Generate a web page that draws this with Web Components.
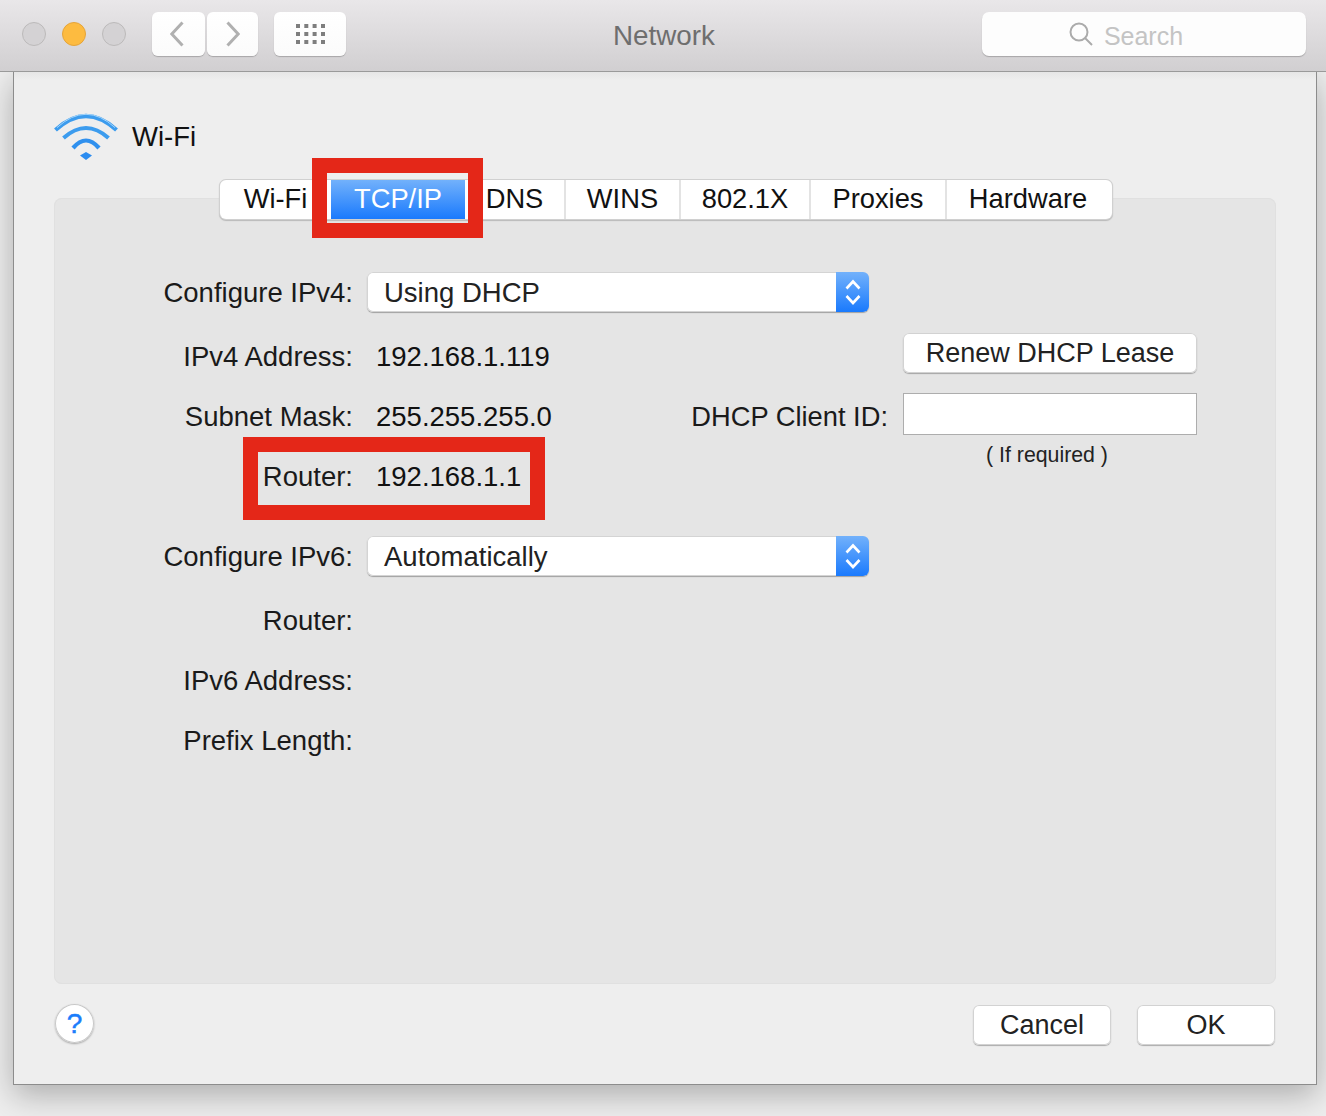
<!DOCTYPE html>
<html>
<head>
<meta charset="utf-8">
<title>Network</title>
<style>
  html, body { margin: 0; height: 1116px; overflow: hidden; background: #eeeeee; }
  body { font-family: 'Liberation Sans', Arial, sans-serif; font-size: 27.5px; color: #1a1a1a; }
</style>
</head>
<body>
<net-app></net-app>

<script>
// small helper, every element below has the same shadow setup
function shadow(el, html) {
  el.attachShadow({ mode: 'open' });
  el.shadowRoot.innerHTML = html;
}

class ToolButton extends HTMLElement {
  connectedCallback() {
    shadow(this, `
      <style>
        :host {
          display: flex; align-items: center; justify-content: center;
          height: 44px; width: var(--w, 52px); box-sizing: border-box;
          background: linear-gradient(#ffffff, #fbfbfb);
          border-radius: 6px;
          box-shadow: 0 1px 1px rgba(0,0,0,.22);
        }
        svg { display: block; }
      </style>
      <slot></slot>`);
  }
}
customElements.define('tool-button', ToolButton);

class MacToolbar extends HTMLElement {
  connectedCallback() {
    shadow(this, `
      <style>
        :host {
          display: flex; align-items: center; box-sizing: border-box;
          height: 72px; padding: 0 20px 4px 22px;
          background: linear-gradient(#e9e7e9, #d1cfd1);
          border-bottom: 1px solid #9a9a9a;
          position: relative; z-index: 2;
        }
        .light { width: 24px; height: 24px; box-sizing: border-box; border-radius: 50%;
          background: #d4d2d4; border: 1px solid #bcbaba; margin-right: 16px; }
        .light.on { background: #fdbb40; border-color: #e5a43a; }
        .lights { display: flex; margin-right: 10px; }
        .nav { display: flex; gap: 2px; margin-right: 16px; }
        .title { flex: 1; text-align: center; color: #6e6e6e; font-size: 27.8px; padding-top: 4px; }
        .search { display: flex; align-items: center; justify-content: center; gap: 11px;
          width: 324px; height: 44px; box-sizing: border-box; padding-right: 36px;
          background: #fdfdfd; border-radius: 7px;
          box-shadow: 0 1px 1px rgba(0,0,0,.22); color: #c4c4c4; font-size: 25px; }
        .search span { padding-top: 5px; }
      </style>
      <div class="lights">
        <div class="light"></div><div class="light on"></div><div class="light"></div>
      </div>
      <div class="nav">
        <tool-button style="--w:53px">
          <svg style="margin-right:3px" width="14" height="26" viewBox="0 0 14 26"><path d="M12.5 1.5L1.8 13l10.7 11.5" fill="none" stroke="#b0b0b0" stroke-width="3"/></svg>
        </tool-button>
        <tool-button style="--w:51px">
          <svg width="14" height="26" viewBox="0 0 14 26"><path d="M1.5 1.5L12.2 13 1.5 24.5" fill="none" stroke="#b0b0b0" stroke-width="3"/></svg>
        </tool-button>
      </div>
      <tool-button style="--w:72px">
        <svg width="29" height="20" viewBox="0 0 29 20" fill="#7e7e7e">
          <rect x="0" y="0" width="4" height="4"/><rect x="8.3" y="0" width="4" height="4"/><rect x="16.6" y="0" width="4" height="4"/><rect x="25" y="0" width="4" height="4"/>
          <rect x="0" y="8" width="4" height="4"/><rect x="8.3" y="8" width="4" height="4"/><rect x="16.6" y="8" width="4" height="4"/><rect x="25" y="8" width="4" height="4"/>
          <rect x="0" y="16" width="4" height="4"/><rect x="8.3" y="16" width="4" height="4"/><rect x="16.6" y="16" width="4" height="4"/><rect x="25" y="16" width="4" height="4"/>
        </svg>
      </tool-button>
      <div class="title">Network</div>
      <div class="search">
        <svg width="24" height="24" viewBox="0 0 24 24" fill="none" stroke="#ababab" stroke-width="2"><circle cx="10" cy="10" r="8.5"/><path d="M16 16l7 7"/></svg>
        <span>Search</span>
      </div>`);
  }
}
customElements.define('mac-toolbar', MacToolbar);

class WifiHeader extends HTMLElement {
  connectedCallback() {
    shadow(this, `
      <style>
        :host { display: flex; align-items: center; gap: 14px; height: 47px; }
        svg { display: block; }
        span { color: #111; }
      </style>
      <svg width="64" height="47" viewBox="0 0 64 47" fill="none" stroke-linecap="butt">
        <path d="M1.5 17Q32 -11 62.5 17" stroke="#3c9cee" stroke-width="4.2"/>
        <path d="M3 14.6Q32 -12 61 14.6" stroke="#a6d6fa" stroke-width="1"/>
        <path d="M9.5 25Q32 5 54.5 25" stroke="#3c9cee" stroke-width="4"/>
        <path d="M19 35Q32 20 45 35" stroke="#2f90ee" stroke-width="4.2"/>
        <path d="M26 42.5L32 39 38 42.5 32 47Z" fill="#2b8cf0"/>
      </svg>
      <span><slot></slot></span>`);
  }
}
customElements.define('wifi-header', WifiHeader);

class TabItem extends HTMLElement {
  connectedCallback() {
    shadow(this, `
      <style>
        :host {
          display: flex; align-items: center; justify-content: center;
          width: var(--w); box-sizing: border-box; height: 100%;
          padding-bottom: 2px; padding-right: var(--pr, 0);
          border-left: 2px solid #e3e3e3; color: #111; font-size: 27.3px;
        }
        :host([first]) { border-left: none; }
        :host([selected]) {
          border-left: none; color: #fff;
          background: linear-gradient(#72b1fb, #1a7afd);
        }
      </style>
      <slot></slot>`);
  }
}
customElements.define('tab-item', TabItem);

class TabBar extends HTMLElement {
  connectedCallback() {
    shadow(this, `
      <style>
        :host {
          display: flex; align-self: center; height: 39px;
          margin: -18px 0 0 2px; background: #fff; border-radius: 6px;
          box-shadow: 0 0 0 1px #d0d0d0, 0 1px 1px 1px #b8b8b8;
        }
      </style>
      <slot></slot>`);
  }
}
customElements.define('tab-bar', TabBar);

class PopUp extends HTMLElement {
  connectedCallback() {
    shadow(this, `
      <style>
        :host {
          display: flex; width: 502px; height: 40px; box-sizing: border-box;
          background: #fff; border-radius: 6px; overflow: hidden; color: #222;
          box-shadow: 0 0 0 1px #d4d4d4 inset, 0 1px 1px rgba(0,0,0,.3);
        }
        .text { flex: 1; padding: 1px 0 0 17px; line-height: 40px; }
        .arrows { width: 33px; display: flex; align-items: center; justify-content: center;
          background: linear-gradient(#72b1fb, #1a7afd); }
      </style>
      <div class="text"><slot></slot></div>
      <div class="arrows">
        <svg width="16" height="28" viewBox="0 0 16 28" fill="none" stroke="#fff" stroke-width="2.6"><path d="M1.5 10.5L8 3.5 14.5 10.5"/><path d="M1.5 18L8 25 14.5 18"/></svg>
      </div>`);
  }
}
customElements.define('pop-up', PopUp);

class FormRow extends HTMLElement {
  connectedCallback() {
    shadow(this, `
      <style>
        :host { display: flex; align-items: center; height: 60px; }
        .label { width: 299px; text-align: right; margin-right: 14px; flex: none; padding-top: 2px; color: #1a1a1a; }
        .value { display: block; color: #111; }
        :host([text]) .value { padding: 2px 0 0 9px; }
      </style>
      <div class="label">${this.getAttribute('label')}</div>
      <div class="value"><slot></slot></div>`);
  }
}
customElements.define('form-row', FormRow);

class PushButton extends HTMLElement {
  connectedCallback() {
    shadow(this, `
      <style>
        :host {
          display: flex; align-items: center; justify-content: center;
          width: var(--w, 138px); height: 40px; box-sizing: border-box;
          background: #fff; border-radius: 6px; color: #222; font-size: 27px;
          box-shadow: 0 0 0 1px #d2d2d2 inset, 0 1px 1px rgba(0,0,0,.28);
        }
      </style>
      <slot></slot>`);
  }
}
customElements.define('push-button', PushButton);

class DhcpSide extends HTMLElement {
  connectedCallback() {
    shadow(this, `
      <style>
        :host {
          display: flex; flex-direction: column; align-items: flex-end;
          margin: 7px 79px 0 auto;
        }
        .id { display: flex; align-items: center; gap: 15px; margin-top: 20px; }
        .id span { padding-top: 6px; font-size: 27.3px; }
        .field { width: 294px; height: 42px; box-sizing: border-box; background: #fff; border: 1px solid #adadad; }
        .note { width: 294px; text-align: center; font-size: 21.3px; color: #222; margin-top: 8px; padding-right: 6px; box-sizing: border-box; }
      </style>
      <push-button style="--w:294px">Renew DHCP Lease</push-button>
      <div class="id"><span>DHCP Client ID:</span><div class="field"></div></div>
      <div class="note">( If required )</div>`);
  }
}
customElements.define('dhcp-side', DhcpSide);

class HelpButton extends HTMLElement {
  connectedCallback() {
    shadow(this, `
      <style>
        :host {
          display: flex; align-items: center; justify-content: center;
          width: 39px; height: 39px; box-sizing: border-box; border-radius: 50%;
          background: #fff; color: #1a7dfb; font-size: 28px;
          -webkit-text-stroke: .5px #1a7dfb;
          box-shadow: 0 0 0 1px #c8c8c8 inset, 0 1px 2px rgba(0,0,0,.3);
        }
      </style>?`);
  }
}
customElements.define('help-button', HelpButton);

class RedBox extends HTMLElement {
  connectedCallback() {
    shadow(this, `
      <style>
        :host { position: absolute; display: block; box-sizing: border-box; border: 15px solid #e42718; }
      </style>`);
  }
}
customElements.define('red-box', RedBox);

class NetApp extends HTMLElement {
  connectedCallback() {
    shadow(this, `
      <style>
        :host { display: block; position: relative; height: 1116px; }
        .window {
          margin: 0 9px 0 13px; height: 1013px; box-sizing: border-box;
          display: flex; flex-direction: column;
          padding: 41px 40px 38px 40px;
          background: linear-gradient(#e6e6e6, #eeeeee 8px);
          border: 1px solid #8c8c8c; border-top: none;
          box-shadow: 0 10px 30px rgba(0,0,0,.28);
        }
        .panel {
          flex: 1; display: flex; flex-direction: column; margin-top: 38px;
          background: #e5e5e5; border-radius: 8px;
          box-shadow: 0 0 0 1px #e0e0e0 inset;
        }
        .form { padding-top: 43px; display: flex; flex-direction: column; }
        .group { display: flex; margin-top: 4px; }
        .gap { height: 20px; }
        .footer { display: flex; align-items: center; gap: 26px; margin-top: 20px; padding: 0 1px; height: 42px; }
        help-button { margin-right: auto; margin-top: -3px; }
      </style>
      <mac-toolbar></mac-toolbar>
      <div class="window">
        <wifi-header>Wi-Fi</wifi-header>
        <div class="panel">
          <tab-bar>
            <tab-item first style="--w:111px">Wi-Fi</tab-item>
            <tab-item selected style="--w:134px">TCP/IP</tab-item>
            <tab-item first style="--w:99px">DNS</tab-item>
            <tab-item style="--w:115px">WINS</tab-item>
            <tab-item style="--w:130px">802.1X</tab-item>
            <tab-item style="--w:136px">Proxies</tab-item>
            <tab-item style="--w:167px;--pr:3px">Hardware</tab-item>
          </tab-bar>
          <div class="form">
            <form-row label="Configure IPv4:"><pop-up>Using DHCP</pop-up></form-row>
            <div class="group">
              <div>
                <form-row text label="IPv4 Address:">192.168.1.119</form-row>
                <form-row text label="Subnet Mask:">255.255.255.0</form-row>
                <form-row text label="Router:">192.168.1.1</form-row>
              </div>
              <dhcp-side></dhcp-side>
            </div>
            <div class="gap"></div>
            <form-row label="Configure IPv6:"><pop-up>Automatically</pop-up></form-row>
            <div class="group">
              <div>
                <form-row text label="Router:"></form-row>
                <form-row text label="IPv6 Address:"></form-row>
                <form-row text label="Prefix Length:"></form-row>
              </div>
            </div>
          </div>
        </div>
        <div class="footer">
          <help-button></help-button>
          <push-button>Cancel</push-button>
          <push-button>OK</push-button>
        </div>
      </div>
      <red-box style="left:312px;top:158px;width:171px;height:80px"></red-box>
      <red-box style="left:243px;top:437px;width:302px;height:83px"></red-box>`);
  }
}
customElements.define('net-app', NetApp);
</script>
</body>
</html>
